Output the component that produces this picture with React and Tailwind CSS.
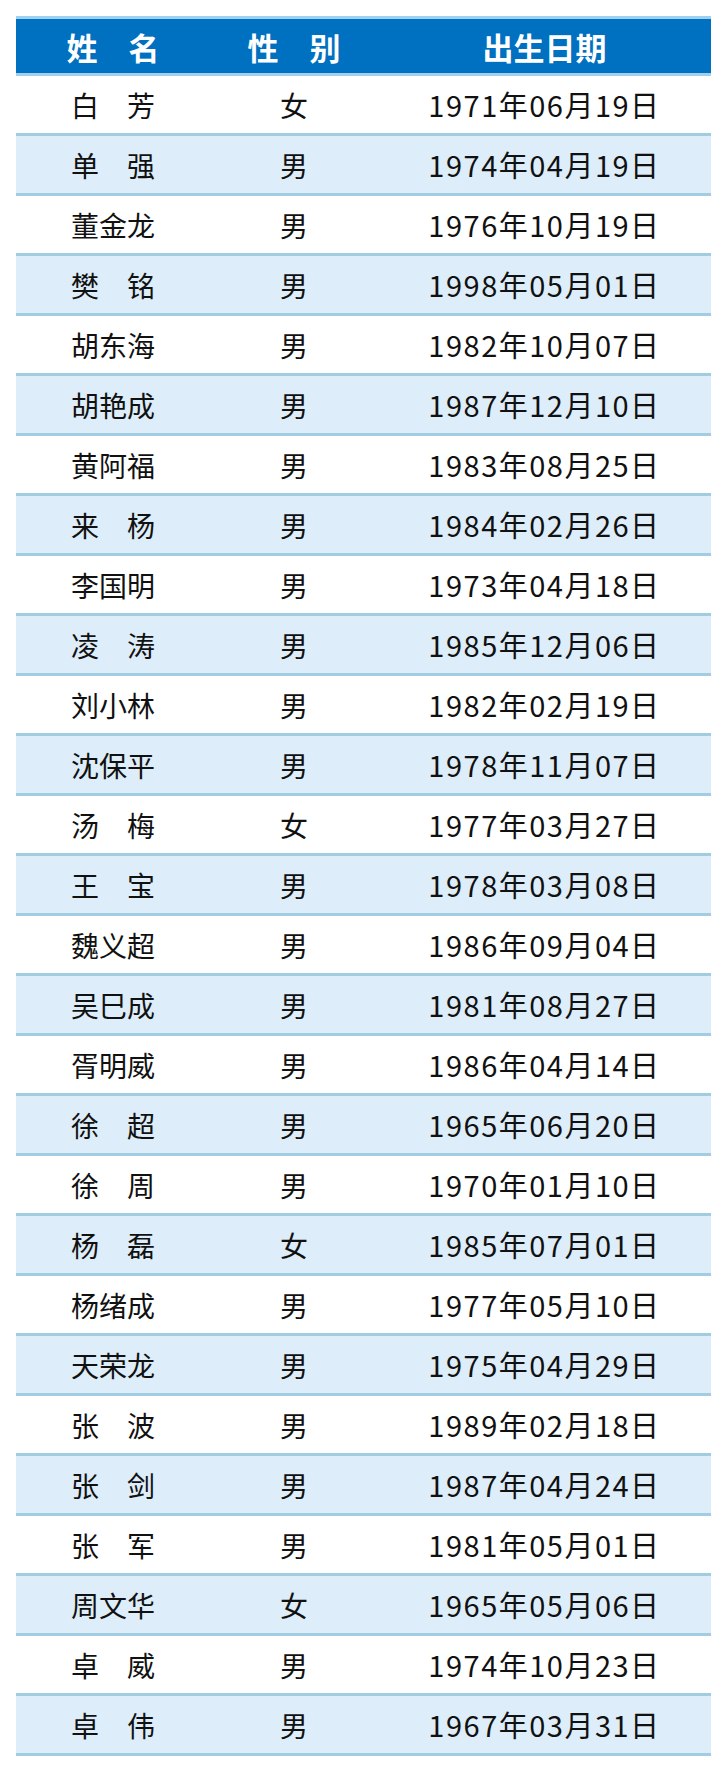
import React from 'react';

const ROWS = [
  ['白　芳', '女', '1971年06月19日'],
  ['单　强', '男', '1974年04月19日'],
  ['董金龙', '男', '1976年10月19日'],
  ['樊　铭', '男', '1998年05月01日'],
  ['胡东海', '男', '1982年10月07日'],
  ['胡艳成', '男', '1987年12月10日'],
  ['黄阿福', '男', '1983年08月25日'],
  ['来　杨', '男', '1984年02月26日'],
  ['李国明', '男', '1973年04月18日'],
  ['凌　涛', '男', '1985年12月06日'],
  ['刘小林', '男', '1982年02月19日'],
  ['沈保平', '男', '1978年11月07日'],
  ['汤　梅', '女', '1977年03月27日'],
  ['王　宝', '男', '1978年03月08日'],
  ['魏义超', '男', '1986年09月04日'],
  ['吴巳成', '男', '1981年08月27日'],
  ['胥明威', '男', '1986年04月14日'],
  ['徐　超', '男', '1965年06月20日'],
  ['徐　周', '男', '1970年01月10日'],
  ['杨　磊', '女', '1985年07月01日'],
  ['杨绪成', '男', '1977年05月10日'],
  ['天荣龙', '男', '1975年04月29日'],
  ['张　波', '男', '1989年02月18日'],
  ['张　剑', '男', '1987年04月24日'],
  ['张　军', '男', '1981年05月01日'],
  ['周文华', '女', '1965年05月06日'],
  ['卓　威', '男', '1974年10月23日'],
  ['卓　伟', '男', '1967年03月31日'],
];

const font = { fontFamily: '"Noto Sans CJK SC", "Liberation Sans", sans-serif' };

export default function App() {
  return (
    <div className="w-[726px] h-[1772px] bg-white pt-4 pl-4" style={font}>
      <div className="w-[695px]">
        <div className="h-[60px] flex items-center bg-[#0070c0] border-t-[3px] border-b-[3px] border-[#9fd0f2] text-white font-bold text-[31px] leading-none">
          <div className="w-[194px] text-center">姓　名</div>
          <div className="w-[168px] text-center">性　别</div>
          <div className="flex-1 text-center">出生日期</div>
        </div>
        {ROWS.map((r, i) => (
          <div
            key={i}
            className={
              'h-[60px] flex items-center border-b-[3px] border-[#a2cde0] text-[#111] text-[28px] leading-none ' +
              (i % 2 === 1 ? 'bg-[#ddedf9]' : 'bg-white')
            }
          >
            <div className="w-[194px] text-center">{r[0]}</div>
            <div className="w-[168px] text-center">{r[1]}</div>
            <div className="flex-1 text-center text-[29px] tracking-[1.5px]">{r[2]}</div>
          </div>
        ))}
      </div>
    </div>
  );
}
